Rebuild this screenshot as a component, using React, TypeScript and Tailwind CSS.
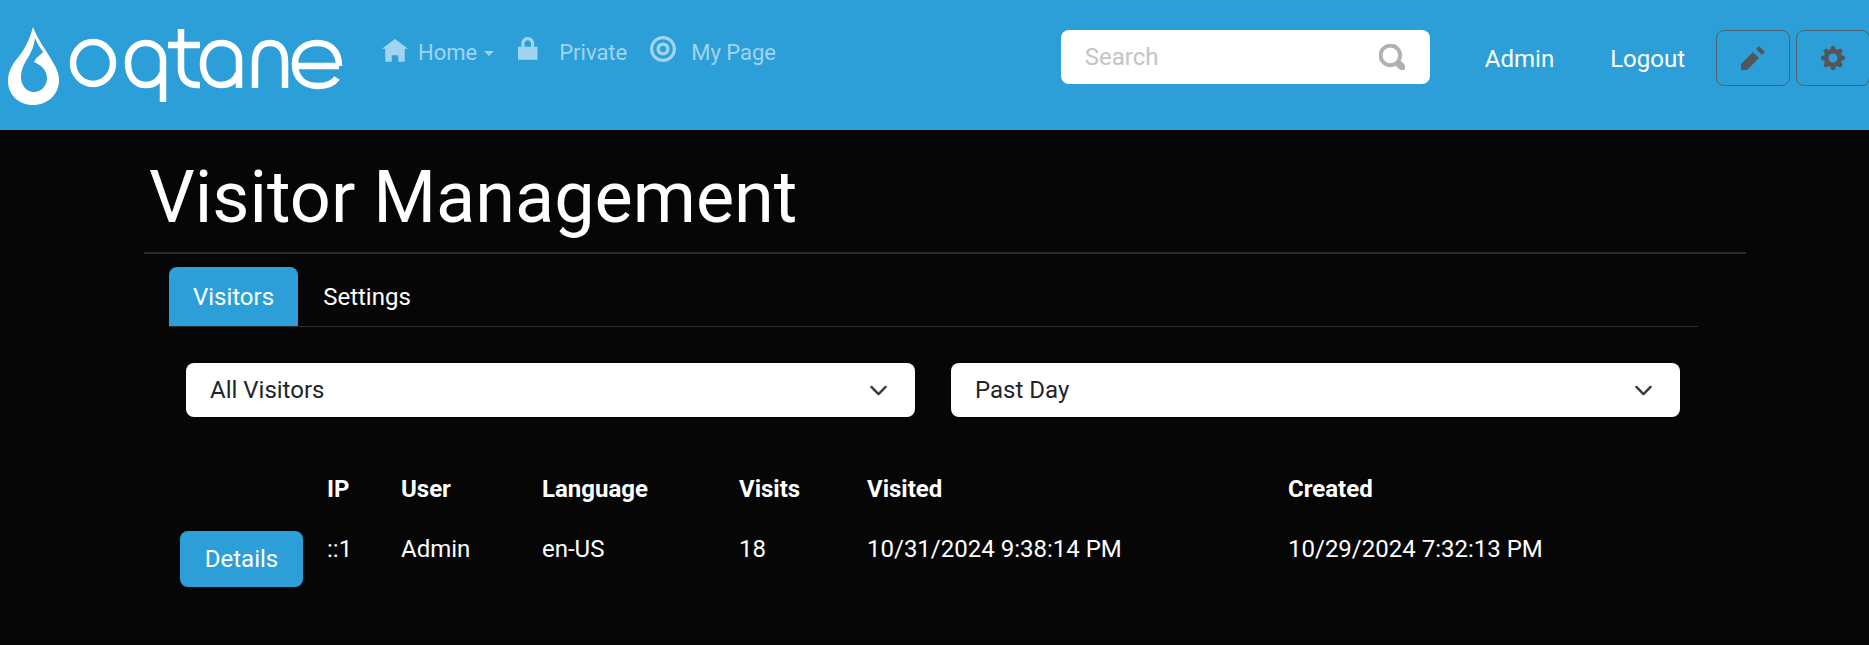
const ICONS = {
  home: 'M4 0l-4 3h1v4h2v-2h2v2h2v-4.03l1 .03-4-3z',
  lock: 'M3 0c-1.1 0-2 .9-2 2v1h-1v4h6v-4h-1v-1c0-1.1-.9-2-2-2zm0 1c.56 0 1 .44 1 1v1h-2v-1c0-.56.44-1 1-1z',
  target:
    'M4 0c-2.2 0-4 1.8-4 4s1.8 4 4 4 4-1.8 4-4-1.8-4-4-4zm0 1c1.66 0 3 1.34 3 3s-1.34 3-3 3-3-1.34-3-3 1.34-3 3-3zm0 1c-1.1 0-2 .9-2 2s.9 2 2 2 2-.9 2-2-.9-2-2-2zm0 1c.56 0 1 .44 1 1s-.44 1-1 1-1-.44-1-1 .44-1 1-1z',
  pencil: 'M6 0l-1 1 2 2 1-1-2-2zm-2 2l-4 4v2h2l4-4-2-2z',
  cog: 'M3.5 0l-.5 1.19c-.1.03-.19.08-.28.13l-1.19-.5-.72.72.5 1.19c-.05.1-.09.18-.13.28l-1.19.5v1l1.19.5c.04.1.08.18.13.28l-.5 1.19.72.72 1.19-.5c.09.04.18.09.28.13l.5 1.19h1l.5-1.19c.09-.04.19-.08.28-.13l1.19.5.72-.72-.5-1.19c.04-.09.09-.19.13-.28l1.19-.5v-1l-1.19-.5c-.03-.09-.08-.19-.13-.28l.5-1.19-.72-.72-1.19.5c-.09-.04-.19-.09-.28-.13l-.5-1.19h-1zm.5 2.5c.83 0 1.5.67 1.5 1.5s-.67 1.5-1.5 1.5-1.5-.67-1.5-1.5.67-1.5 1.5-1.5z',
  search:
    'M3.5 0c-1.93 0-3.5 1.57-3.5 3.5s1.57 3.5 3.5 3.5c.59 0 1.17-.14 1.66-.41a1 1 0 0 0 .13.13l1 1a1.02 1.02 0 1 0 1.44-1.44l-1-1a1 1 0 0 0-.16-.13c.27-.49.44-1.06.44-1.66 0-1.93-1.57-3.5-3.5-3.5zm0 1c1.39 0 2.5 1.11 2.5 2.5 0 .66-.24 1.27-.66 1.72-.01.01-.02.02-.03.03a1 1 0 0 0-.13.13c-.44.4-1.04.63-1.69.63-1.39 0-2.5-1.11-2.5-2.5s1.11-2.5 2.5-2.5z',
};

function Icon({ name, className }: { name: keyof typeof ICONS; className: string }) {
  return (
    <svg viewBox="0 0 8 8" fill="currentColor" className={className}>
      <path d={ICONS[name]} />
    </svg>
  );
}

function Logo() {
  return (
    <svg viewBox="0 0 350 110" className="h-[110px] w-[350px] shrink-0">
      <path
        fillRule="evenodd"
        fill="#fff"
        d="M33 27C38 40 44 47 51 59C56 67 59 73 59 80C59 95 47 105 33 105C19 105 8 95 8 81C8 71 13 63 20 55C26 47 30 38 33 27ZM34 62C36 57 42 54 43 52C40 48 37 43 35 38C34 46 32 50 29 56C25 62 21 69 21 77C21 85 26 92 34 92C41 92 47 86 47 78C47 70 41 65 34 62Z"
      />
      <g fill="none" stroke="#fff" strokeWidth="6.5">
        <ellipse cx="93" cy="63" rx="20" ry="21" />
        <path d="M163 102V60C163 49 154 43 146 43C135 43 128 51 128 63C128 76 135 85 146 85C154 85 160 80 163 72" />
        <path d="M181 29V68C181 79 187 85 198 85H200" />
        <path d="M168 45H200" />
        <path d="M239 88V60C239 49 231 43 221 43C210 43 203 52 203 64C203 76 210 85 221 85C230 85 236 80 239 72" />
        <path d="M255 88V62C255 50 260 43 270 43C280 43 285 50 285 62V88" />
        <path d="M339 66H295M337 78C333 84 327 86 318 86C304 86 295 78 295 64C295 51 304 43 317 43C331 43 339 52 339 66" />
      </g>
    </svg>
  );
}

function NavLink({
  icon,
  label,
  iconClass,
  textClass,
  caret,
}: {
  icon: keyof typeof ICONS;
  label: string;
  iconClass: string;
  textClass: string;
  caret?: boolean;
}) {
  return (
    <a className="flex items-center text-[22px] text-[#a0d4f0]">
      <Icon name={icon} className={iconClass} />
      <span className={textClass}>{label}</span>
      {caret && <span className="ml-[7px] mt-[2px] border-x-[5px] border-t-[5px] border-x-transparent border-t-[#a0d4f0]" />}
    </a>
  );
}

function SelectBox({ label }: { label: string }) {
  return (
    <div className="flex h-[54px] w-[729px] items-center justify-between rounded-lg bg-white pl-6 pr-[27px] text-[#212529]">
      <span>{label}</span>
      <svg viewBox="0 0 16 16" className="h-[19px] w-[19px]" fill="none" stroke="#343a40" strokeWidth="2" strokeLinecap="round" strokeLinejoin="round">
        <path d="M2 5l6 6 6-6" />
      </svg>
    </div>
  );
}

export default function App() {
  return (
    <div className="min-h-[645px] overflow-hidden bg-[#060606] font-['Roboto',sans-serif] text-[24px] text-white">
      <header className="flex h-[130px] items-start bg-[#2c9fd8]">
        <Logo />
        <nav className="ml-[32px] mt-[37px] flex h-[30px] items-center">
          <NavLink icon="home" label="Home" iconClass="h-[26px] w-[26px]" textClass="ml-[10px]" caret />
          <NavLink icon="lock" label="Private" iconClass="ml-[24px] mb-[4px] h-[26px] w-[26px]" textClass="ml-[15px]" />
          <NavLink icon="target" label="My Page" iconClass="ml-[23px] mb-[6px] h-[26px] w-[26px]" textClass="ml-[15px]" />
        </nav>
        <div className="ml-auto mt-[30px] flex items-start">
          <div className="flex h-[54px] w-[369px] items-center rounded-lg bg-white pl-6 pr-[25px]">
            <input placeholder="Search" className="min-w-0 flex-1 outline-none placeholder:text-[#c4c4c4]" />
            <Icon name="search" className="h-[26px] w-[26px] stroke-[#b0b0b0] stroke-[0.25] text-[#b0b0b0]" />
          </div>
          <a className="ml-[55px] mt-[11px]">Admin</a>
          <a className="ml-[56px] mt-[11px]">Logout</a>
          <button className="ml-[31px] flex h-[56px] w-[74px] items-center justify-center rounded-lg border border-[#4f6470] text-[#555]">
            <Icon name="pencil" className="h-[24px] w-[24px]" />
          </button>
          <button className="ml-[6px] -mr-[1px] flex h-[56px] w-[74px] items-center justify-center rounded-lg border border-[#4f6470] text-[#555]">
            <Icon name="cog" className="h-[24px] w-[24px]" />
          </button>
        </div>
      </header>

      <main className="pl-[144px] pr-[123px]">
        <h1 className="mt-[21px] pl-[5px] text-[72px] leading-[93px]">Visitor Management</h1>
        <div className="mt-[8px] h-[2px] bg-[#2a2a2a]" />

        <div className="ml-[25px] mr-[48px] mt-[13px] flex h-[60px] items-stretch border-b border-[#2d2d2d]">
          <a className="flex w-[129px] items-center justify-center rounded-t-lg bg-[#2c9fd8]">Visitors</a>
          <a className="flex w-[138px] items-center justify-center">Settings</a>
        </div>

        <div className="ml-[42px] mt-[36px] flex gap-[36px]">
          <SelectBox label="All Visitors" />
          <SelectBox label="Past Day" />
        </div>

        <table className="ml-[24px] mt-[36px] w-[1530px] table-fixed border-collapse text-left">
          <colgroup>
            <col className="w-[147px]" />
            <col className="w-[74px]" />
            <col className="w-[141px]" />
            <col className="w-[197px]" />
            <col className="w-[128px]" />
            <col className="w-[421px]" />
            <col />
          </colgroup>
          <thead>
            <tr className="h-[72px] font-bold">
              <th />
              <th className="px-3">IP</th>
              <th className="px-3">User</th>
              <th className="px-3">Language</th>
              <th className="px-3">Visits</th>
              <th className="px-3">Visited</th>
              <th className="px-3">Created</th>
            </tr>
          </thead>
          <tbody>
            <tr>
              <td className="px-3 pt-[6px] align-top">
                <button className="h-[56px] w-[123px] rounded-lg bg-[#2c9fd8]">Details</button>
              </td>
              <td className="px-3 pb-[36px] align-top leading-[48px]">::1</td>
              <td className="px-3 pb-[36px] align-top leading-[48px]">Admin</td>
              <td className="px-3 pb-[36px] align-top leading-[48px]">en-US</td>
              <td className="px-3 pb-[36px] align-top leading-[48px]">18</td>
              <td className="px-3 pb-[36px] align-top leading-[48px]">10/31/2024 9:38:14 PM</td>
              <td className="px-3 pb-[36px] align-top leading-[48px]">10/29/2024 7:32:13 PM</td>
            </tr>
          </tbody>
        </table>
      </main>
    </div>
  );
}
